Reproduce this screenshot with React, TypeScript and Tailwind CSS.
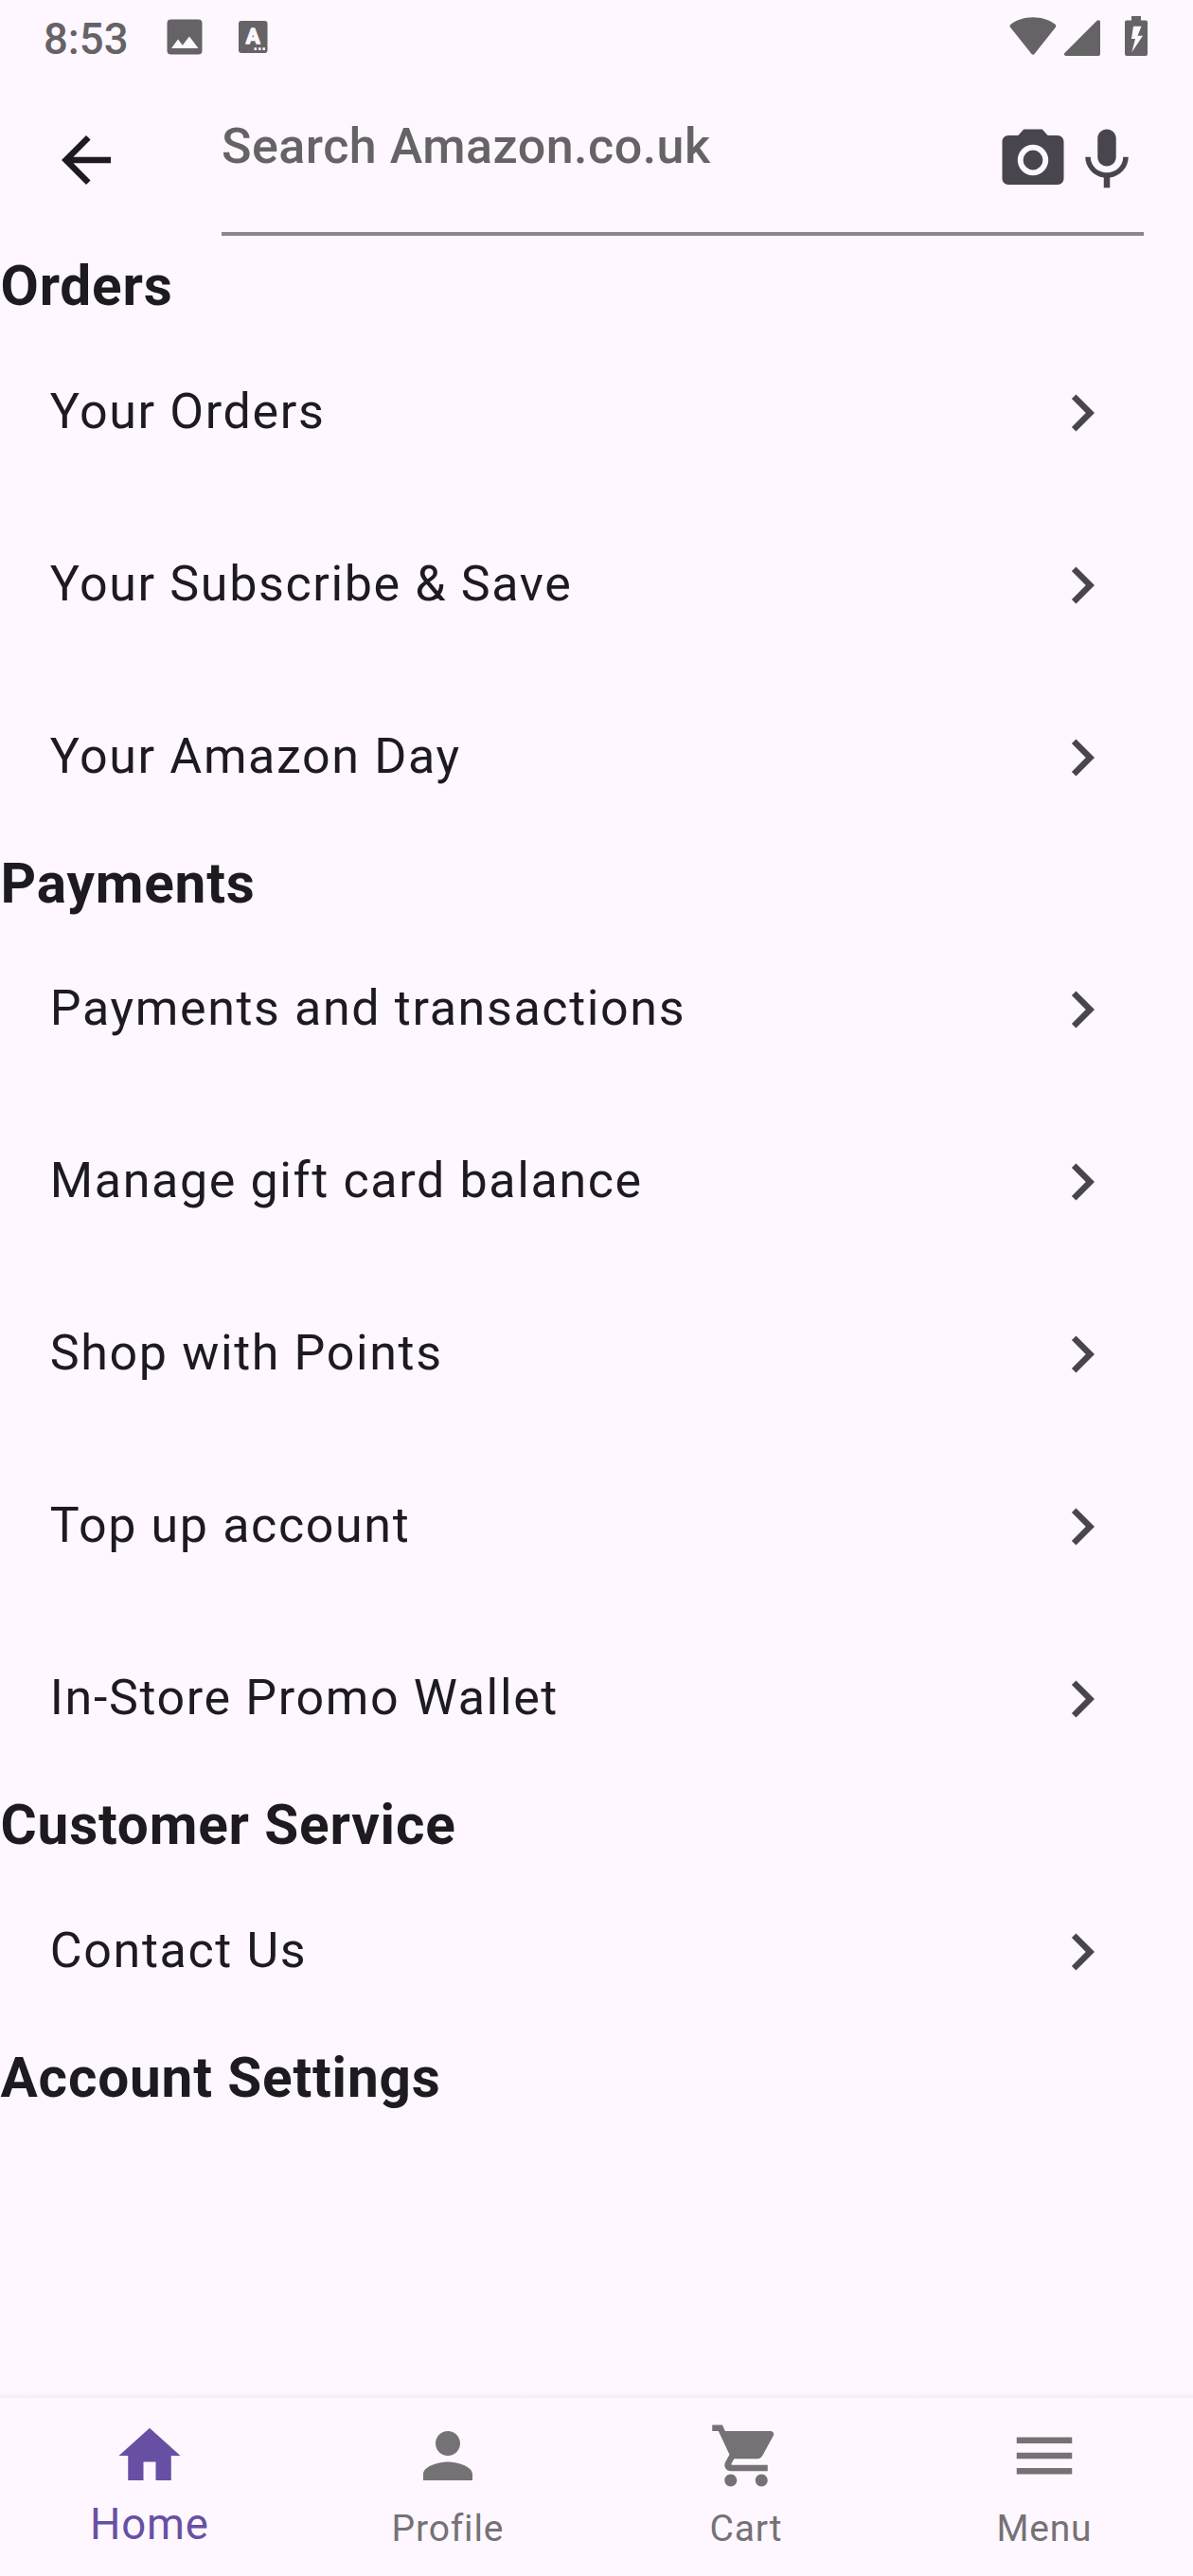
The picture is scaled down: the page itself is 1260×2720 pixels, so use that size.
import type { ReactNode } from "react";

const paths = {
  back: "M20 11H7.83l5.59-5.59L12 4l-8 8 8 8 1.41-1.41L7.83 13H20v-2z",
  camera:
    "M12 8.8a3.2 3.2 0 1 0 0 6.4 3.2 3.2 0 1 0 0-6.4zM9 2L7.17 4H4c-1.1 0-2 .9-2 2v12c0 1.1.9 2 2 2h16c1.1 0 2-.9 2-2V6c0-1.1-.9-2-2-2h-3.17L15 2H9zm3 15c-2.76 0-5-2.24-5-5s2.24-5 5-5 5 2.24 5 5-2.24 5-5 5z",
  mic: "M12 14c1.66 0 2.99-1.34 2.99-3L15 5c0-1.66-1.34-3-3-3S9 3.34 9 5v6c0 1.66 1.34 3 3 3zm5.3-3c0 3-2.54 5.1-5.3 5.1S6.7 14 6.7 11H5c0 3.41 2.72 6.23 6 6.72V21h2v-3.28c3.28-.48 6-3.3 6-6.72h-1.7z",
  chevron: "M10 6L8.59 7.41 13.17 12l-4.58 4.59L10 18l6-6z",
  home: "M10 20v-6h4v6h5v-8h3L12 3 2 12h3v8z",
  person:
    "M12 12c2.21 0 4-1.79 4-4s-1.79-4-4-4-4 1.79-4 4 1.79 4 4 4zm0 2c-2.67 0-8 1.34-8 4v2h16v-2c0-2.66-5.33-4-8-4z",
  cart: "M7 18c-1.1 0-1.99.9-1.99 2S5.9 22 7 22s2-.9 2-2-.9-2-2-2zM1 2v2h2l3.6 7.59-1.35 2.45c-.16.28-.25.61-.25.96 0 1.1.9 2 2 2h12v-2H7.42c-.14 0-.25-.11-.25-.25l.03-.12.9-1.63h7.45c.75 0 1.41-.41 1.75-1.03l3.58-6.49c.08-.14.12-.31.12-.48 0-.55-.45-1-1-1H5.21l-.94-2H1zm16 16c-1.1 0-1.99.9-1.99 2s.89 2 1.99 2 2-.9 2-2-.9-2-2-2z",
  menu: "M3 18h18v-2H3v2zm0-5h18v-2H3v2zm0-7v2h18V6H3z",
};

function Icon({ name }: { name: keyof typeof paths }) {
  return (
    <svg viewBox="0 0 24 24" className="size-[78px] shrink-0 fill-current" aria-hidden="true">
      <path d={paths[name]} />
    </svg>
  );
}

function StatusBar() {
  return (
    <div className="flex h-[78px] items-start justify-between pl-[46px] pr-12 text-[#666366]">
      <div className="flex items-start">
        <span className="mt-[15px] w-[130px] text-[45.5px] leading-[54px] font-medium">8:53</span>
        <svg width="38" height="38" viewBox="0 0 38 38" className="mt-5 fill-current">
          <path
            fillRule="evenodd"
            d="M4.5.5h29a4 4 0 0 1 4 4v29a4 4 0 0 1-4 4h-29a4 4 0 0 1-4-4v-29a4 4 0 0 1 4-4zM5 31h28.500L24 18.500l-7.200 9.300L12 21.500z"
          />
        </svg>
        <svg width="31" height="34" viewBox="0 0 31 34" className="mt-[22px] ml-[37.500px]">
          <rect width="30.500" height="34" rx="3" className="fill-current" />
          <text
            x="15.250"
            y="24.300"
            textAnchor="middle"
            fontSize="22"
            strokeWidth="1.400"
            strokeLinejoin="round"
            className="fill-[#fef7ff] stroke-[#fef7ff] font-bold"
          >
            A
          </text>
          <path d="M16.500 28.300h2.600v2.600h-2.600zM21 28.300h2.600v2.600H21zM25.400 28.300H28v2.600h-2.600z" className="fill-[#fef7ff]" />
        </svg>
      </div>
      <div className="flex items-start">
        <svg width="50" height="40" viewBox="0 0 50 40" className="mt-[18px] fill-current">
          <path d="M25 0.300C34 .3 42 3 48.500 7.700c1 .8 1.100 2 .4 3L26.500 39c-.8 1-2.200 1-3 0L1 10.700c-.7-1-.6-2.200.4-3C8 3 16 .3 25 .3z" />
        </svg>
        <svg width="38" height="38" viewBox="0 0 38 38" className="mt-[21px] ml-2 fill-current">
          <path d="M38 2v34c0 1.200-.8 2-2 2H1.800C0 38-.6 36 .6 34.700L34.600.8C36-.5 38 .2 38 2z" />
        </svg>
        <svg width="24" height="42" viewBox="0 0 24 42" className="mt-[17px] ml-[26px] fill-current">
          <path
            fillRule="evenodd"
            d="M7 0h10v4.500h5a2 2 0 0 1 2 2V40a2 2 0 0 1-2 2H2a2 2 0 0 1-2-2V6.500a2 2 0 0 1 2-2h5zM9 10.800L7 24h4l-3.700 14.300L19 20.800h-5.500l4-10z"
          />
        </svg>
      </div>
    </div>
  );
}

function SearchBar() {
  return (
    <header className="flex h-[182px] items-center pl-[52px] text-[#1d1b20]">
      <button className="mr-[104px]" aria-label="Back">
        <Icon name="back" />
      </button>
      <div className="flex h-[160px] w-[974px] items-center justify-between border-b-4 border-[#8c868f]">
        <span className="-mt-6 text-[52px] leading-[60px] font-medium tracking-[0.4875px] text-[#666366]">
          Search Amazon.co.uk
        </span>
        <div className="flex pt-1 text-[#49454f]">
          <Icon name="camera" />
          <Icon name="mic" />
        </div>
      </div>
    </header>
  );
}

function Section({ title, items }: { title: string; items: string[] }) {
  return (
    <section>
      <h2 className="h-[84.5px] pl-[0.5px] text-[58.5px] leading-[84px] font-bold tracking-[0.8125px]">{title}</h2>
      <ul>
        {items.map((item) => (
          <li key={item} className="flex h-[182px] items-center justify-between pr-[78px] pl-[52.8px]">
            <span className="pb-[1.6px] text-[52px] leading-[78px] tracking-[1.625px]">{item}</span>
            <span className="text-[#49454f]">
              <Icon name="chevron" />
            </span>
          </li>
        ))}
      </ul>
    </section>
  );
}

function Tab({ icon, active, children }: { icon: keyof typeof paths; active?: boolean; children: ReactNode }) {
  return (
    <div className={`flex flex-1 flex-col items-center pt-[22px] ${active ? "text-[#6750a4]" : "text-[#757275]"}`}>
      <Icon name={icon} />
      <span
        className={`mt-1 pl-[0.8px] leading-[60px] tracking-[0.8125px] ${active ? "text-[45.5px]" : "pt-1 text-[39px]"}`}
      >
        {children}
      </span>
    </div>
  );
}

const sections = [
  { title: "Orders", items: ["Your Orders", "Your Subscribe & Save", "Your Amazon Day"] },
  {
    title: "Payments",
    items: [
      "Payments and transactions",
      "Manage gift card balance",
      "Shop with Points",
      "Top up account",
      "In-Store Promo Wallet",
    ],
  },
  { title: "Customer Service", items: ["Contact Us"] },
  { title: "Account Settings", items: [] },
];

export default function App() {
  return (
    <div className="flex h-[2720px] w-[1260px] flex-col overflow-hidden bg-[#fef7ff] font-['Roboto',sans-serif] text-[#1d1b20]">
      <StatusBar />
      <SearchBar />
      <main className="flex-1">
        {sections.map((section) => (
          <Section key={section.title} {...section} />
        ))}
      </main>
      <div className="h-[6px] bg-linear-to-b from-[#fef7ff] to-[#f4edf5]" />
      <nav className="flex h-[188px] bg-[#fef7ff]">
        <Tab icon="home" active>
          Home
        </Tab>
        <Tab icon="person">Profile</Tab>
        <Tab icon="cart">Cart</Tab>
        <Tab icon="menu">Menu</Tab>
      </nav>
    </div>
  );
}
